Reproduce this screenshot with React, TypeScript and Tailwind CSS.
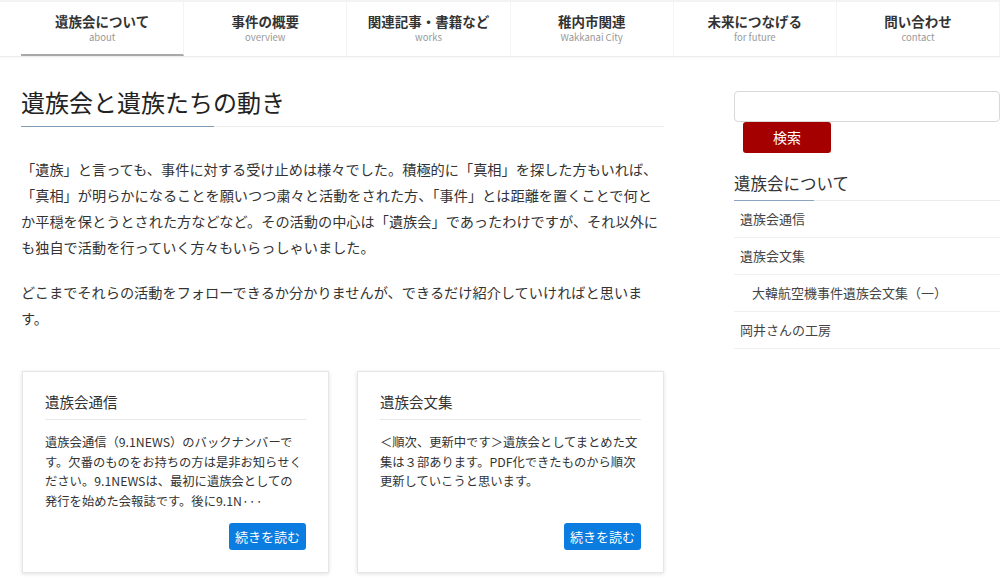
import React from "react";

const font = { fontFamily: '"Noto Sans CJK JP", "Noto Sans", sans-serif' };

const navItems = [
  { ja: "遺族会について", en: "about", active: true },
  { ja: "事件の概要", en: "overview" },
  { ja: "関連記事・書籍など", en: "works" },
  { ja: "稚内市関連", en: "Wakkanai City" },
  { ja: "未来につなげる", en: "for future" },
  { ja: "問い合わせ", en: "contact" },
];

function Card({ title, lines }: { title: string; lines: string[] }) {
  return (
    <div className="flex h-[202px] flex-col border border-[#e6e6e6] bg-white px-[22px] pb-[22px] pt-[19px] shadow-[0_1px_4px_rgba(0,0,0,0.12)]">
      <div className="border-b border-[#e8e8e8] pb-[6px] text-[14.5px] leading-[22px] text-[#333]">{title}</div>
      <p className="mt-[13px] w-[280px] text-[12.3px] leading-[19.5px] text-[#333]">
        {lines.map((l, i) => (
          <React.Fragment key={i}>
            {l}
            {i < lines.length - 1 && <br />}
          </React.Fragment>
        ))}
      </p>
      <div className="mt-auto flex justify-end">
        <button className="h-[27px] w-[77px] rounded-[3px] bg-[#0b7de0] text-[13px] text-white">続きを読む</button>
      </div>
    </div>
  );
}

export default function App() {
  return (
    <div className="min-h-[580px] w-[1000px] overflow-hidden bg-white text-[#333]" style={font}>
      <nav className="flex h-[57px] border-t-[2px] border-b border-t-[#f3f3f3] border-b-[#ececec] pl-[21px] shadow-[0_1px_2px_rgba(0,0,0,0.04)]">
        {navItems.map((n) => (
          <div
            key={n.en}
            className={
              "flex w-[163.2px] shrink-0 flex-col items-center border-r border-[#f4f4f4] pt-[9px] " +
              (n.active ? "border-b-2 border-b-[#a8a8a8]" : "")
            }
          >
            <div className="text-[13.5px] font-bold leading-[20px] text-[#333]">{n.ja}</div>
            <div className="-mt-[1px] text-[9.5px] leading-[14px] text-[#999]">{n.en}</div>
          </div>
        ))}
      </nav>

      <div className="flex">
        <main className="ml-[21px] w-[643px] shrink-0">
          <h1 className="mt-[27px] text-[24px] font-normal leading-[36px] text-[#222]">遺族会と遺族たちの動き</h1>
          <div className="mt-[6px] flex h-px">
            <div className="w-[193px] bg-[#7f9cba]" />
            <div className="flex-1 bg-[#ececec]" />
          </div>
          <p className="mt-[29px] w-[680px] text-[14.2px] leading-[26px] text-[#333]">
            「遺族」と言っても、事件に対する受け止めは様々でした。積極的に「真相」を探した方もいれば、
            <br />
            「真相」が明らかになることを願いつつ粛々と活動をされた方、「事件」とは距離を置くことで何と
            <br />
            か平穏を保とうとされた方などなど。その活動の中心は「遺族会」であったわけですが、それ以外に
            <br />
            も独自で活動を行っていく方々もいらっしゃいました。
          </p>
          <p className="mt-[19px] w-[680px] text-[14.2px] leading-[26px] text-[#333]">
            どこまでそれらの活動をフォローできるか分かりませんが、できるだけ紹介していければと思いま
            <br />
            す。
          </p>
          <div className="mt-[40px] grid grid-cols-2 gap-[28px] pl-px">
            <Card
              title="遺族会通信"
              lines={[
                "遺族会通信（9.1NEWS）のバックナンバーで",
                "す。欠番のものをお持ちの方は是非お知らせく",
                "ださい。9.1NEWSは、最初に遺族会としての",
                "発行を始めた会報誌です。後に9.1N···",
              ]}
            />
            <Card
              title="遺族会文集"
              lines={[
                "＜順次、更新中です＞遺族会としてまとめた文",
                "集は３部あります。PDF化できたものから順次",
                "更新していこうと思います。",
              ]}
            />
          </div>
        </main>

        <aside className="ml-[70px] w-[266px] shrink-0">
          <input className="mt-[34px] block h-[31px] w-full rounded-[4px] border border-[#d8d8d8] px-2 text-[13px]" />
          <button className="ml-[9px] h-[31px] w-[88px] rounded-[3px] bg-[#a50000] text-[14px] text-white">検索</button>
          <h2 className="mt-[18px] text-[16.5px] font-normal leading-[24px] text-[#333]">遺族会について</h2>
          <div className="mt-[5px] flex h-px">
            <div className="w-[80px] bg-[#8aa6c2]" />
            <div className="flex-1 bg-[#ececec]" />
          </div>
          <ul className="text-[13px] text-[#444]">
            <li className="flex h-[37px] items-center border-b border-[#efefef] pl-[6px]">遺族会通信</li>
            <li className="flex h-[37px] items-center border-b border-[#efefef] pl-[6px]">遺族会文集</li>
            <li className="flex h-[37px] items-center border-b border-[#efefef] pl-[18px]">大韓航空機事件遺族会文集（一）</li>
            <li className="flex h-[37px] items-center border-b border-[#efefef] pl-[6px]">岡井さんの工房</li>
          </ul>
        </aside>
      </div>
    </div>
  );
}
